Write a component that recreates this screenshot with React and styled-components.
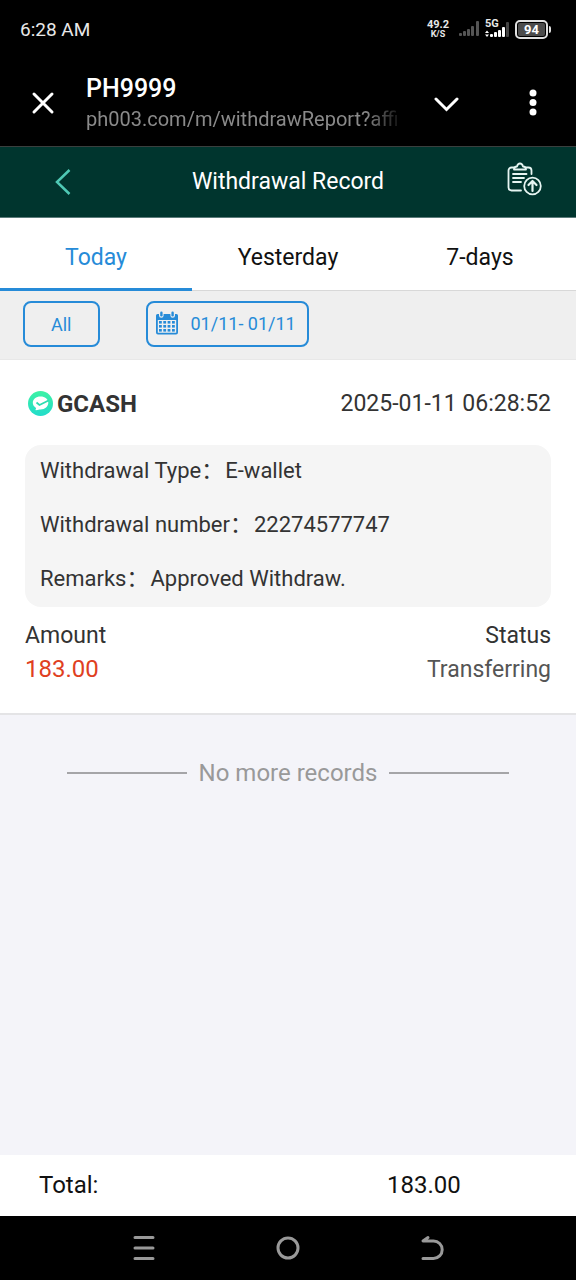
import { useState } from "react";
import styled, { createGlobalStyle } from "styled-components";

const TABS = ["Today", "Yesterday", "7-days"];

const RECORDS = [
	{
		id: 1,
		wallet: "GCASH",
		time: "2025-01-11 06:28:52",
		details: [
			{ label: "Withdrawal Type", value: "E-wallet" },
			{ label: "Withdrawal number", value: "22274577747" },
			{ label: "Remarks", value: "Approved Withdraw." },
		],
		amount: "183.00",
		status: "Transferring",
	},
];

function App() {
	const [activeTab, setActiveTab] = useState("Today");

	return (
		<>
			<GlobalStyle />
			<Screen>
				<StatusBar />
				<BrowserBar />
				<PageHeader>
					<HeaderButton type="button" aria-label="Back">
						<BackIcon />
					</HeaderButton>
					<PageTitle>Withdrawal Record</PageTitle>
					<HeaderButton type="button" aria-label="Withdraw" $end>
						<ClipboardIcon />
					</HeaderButton>
				</PageHeader>
				<Tabs>
					{TABS.map((tab) => (
						<Tab
							key={tab}
							type="button"
							$active={tab === activeTab}
							onClick={() => setActiveTab(tab)}
						>
							{tab}
						</Tab>
					))}
				</Tabs>
				<Filters>
					<FilterButton type="button" $wide>
						All
					</FilterButton>
					<FilterButton type="button">
						<CalendarIcon />
						01/11- 01/11
					</FilterButton>
				</Filters>
				<Content>
					{RECORDS.map((record) => (
						<Record key={record.id} record={record} />
					))}
					<EndOfList>
						<Line />
						No more records
						<Line />
					</EndOfList>
				</Content>
				<TotalBar>
					<span>Total:</span>
					<span>183.00</span>
				</TotalBar>
				<SystemNav />
			</Screen>
		</>
	);
}

export default App;

const GlobalStyle = createGlobalStyle`
	* {
		box-sizing: border-box;
	}
	body {
		margin: 0;
		font-family: Roboto, "Noto Sans CJK SC", sans-serif;
		background: #f4f4f9;
	}
	button {
		margin: 0;
		padding: 0;
		border: 0;
		background: none;
		font-family: inherit;
		color: inherit;
		cursor: pointer;
	}
	svg {
		display: block;
		flex-shrink: 0;
	}
`;

const Screen = styled.div`
	display: flex;
	flex-direction: column;
	min-height: 100vh;
`;

/* ---------- phone status bar ---------- */

const StatusBar = () => (
	<StatusContainer>
		<span>6:28 AM</span>
		<StatusIcons>
			<Speed>
				<span>49.2</span>
				<SpeedUnit>K/S</SpeedUnit>
			</Speed>
			<SignalIcon />
			<Network>
				<NetworkLabel>5G</NetworkLabel>
				<NetworkIcon />
			</Network>
			<Battery>
				<BatteryBody>
					<BatteryLevel>94</BatteryLevel>
				</BatteryBody>
				<BatteryTip />
			</Battery>
		</StatusIcons>
	</StatusContainer>
);

const StatusContainer = styled.div`
	display: flex;
	align-items: center;
	justify-content: space-between;
	height: 60px;
	padding: 0 25px 2px 20px;
	background: #000;
	color: #e8e8e8;
	font-size: 19px;
`;

const StatusIcons = styled.div`
	display: flex;
	align-items: center;
	gap: 6px;
`;

const Speed = styled.div`
	display: flex;
	flex-direction: column;
	align-items: center;
	margin-right: 4px;
	font-size: 11px;
	line-height: 11px;
	font-weight: 700;
`;

const SpeedUnit = styled.span`
	font-size: 9px;
	line-height: 9px;
`;

const Network = styled.div`
	display: grid;
	width: 24px;
	height: 20px;

	& > * {
		grid-area: 1 / 1;
	}
`;

const NetworkLabel = styled.span`
	font-size: 11px;
	line-height: 10px;
	font-weight: 700;
`;

const Battery = styled.div`
	display: flex;
	align-items: center;
	gap: 1px;
`;

const BatteryBody = styled.div`
	display: flex;
	width: 33px;
	height: 19px;
	padding: 1px;
	border: 2px solid #e0e0e0;
	border-radius: 5px;
`;

const BatteryLevel = styled.span`
	flex: 1;
	border-radius: 2px;
	background: #4c4c4c;
	color: #fff;
	font-size: 13px;
	line-height: 13px;
	font-weight: 700;
	text-align: center;
`;

const BatteryTip = styled.span`
	width: 2px;
	height: 7px;
	border-radius: 0 2px 2px 0;
	background: #e0e0e0;
`;

const SignalIcon = () => (
	<svg width="20" height="16" viewBox="0 0 20 16" fill="#555">
		<rect x="0" y="12" width="3" height="3" rx="1" />
		<rect x="4" y="10" width="3" height="5" rx="1" />
		<rect x="8" y="8" width="3" height="7" rx="1" />
		<rect x="12" y="5" width="3" height="10" rx="1" />
		<rect x="17" y="0" width="3" height="15" rx="1" />
	</svg>
);

const NetworkIcon = () => (
	<svg width="24" height="20" viewBox="0 0 24 20" fill="#fff">
		<path d="M0 14l2-2.500 2 2.500zM0 15.500h4L2 18z" />
		<rect x="5" y="15" width="3" height="3" rx="1" />
		<rect x="9" y="13" width="3" height="5" rx="1" />
		<rect x="13" y="11" width="3" height="7" rx="1" />
		<rect x="17" y="8" width="3" height="10" rx="1" />
		<rect x="21" y="3" width="3" height="15" rx="1" fill="#444" />
	</svg>
);

/* ---------- in-app browser bar ---------- */

const BrowserBar = () => (
	<BrowserContainer>
		<BarButton type="button" aria-label="Close">
			<svg width="24" height="24" viewBox="0 0 24 24" stroke="#fff" strokeWidth="3" strokeLinecap="round">
				<path d="M3 3l18 18M21 3L3 21" />
			</svg>
		</BarButton>
		<PageInfo>
			<SiteName>PH9999</SiteName>
			<Url>ph003.com/m/withdrawReport?affi</Url>
		</PageInfo>
		<BarButton type="button" aria-label="Collapse">
			<svg width="26" height="26" viewBox="0 0 26 26" fill="none" stroke="#fff" strokeWidth="3" strokeLinecap="round">
				<path d="M2 9l10.500 10.500L23 9" />
			</svg>
		</BarButton>
		<BarButton type="button" aria-label="More">
			<svg width="8" height="28" viewBox="0 0 8 28" fill="#fff">
				<circle cx="4" cy="4" r="3.500" />
				<circle cx="4" cy="13.500" r="3.500" />
				<circle cx="4" cy="23" r="3.500" />
			</svg>
		</BarButton>
	</BrowserContainer>
);

const BrowserContainer = styled.div`
	display: flex;
	align-items: center;
	height: 87px;
	background: #000;
	border-bottom: 1px solid #3a3f3e;
`;

const BarButton = styled.button`
	display: flex;
	align-items: center;
	justify-content: center;
	width: 86px;
	height: 84px;
`;

const PageInfo = styled.div`
	flex: 1;
	min-width: 0;
	padding-top: 2px;
`;

const SiteName = styled.div`
	color: #fff;
	font-size: 25px;
	line-height: 30px;
	font-weight: 500;
`;

const Url = styled.div`
	white-space: nowrap;
	color: #8a8a8a;
	font-size: 20px;
	line-height: 30px;
	mask-image: linear-gradient(to right, #000 88%, transparent);
`;

/* ---------- page header ---------- */

const PageHeader = styled.header`
	display: grid;
	grid-template-columns: 1fr auto 1fr;
	align-items: center;
	height: 71px;
	padding: 0 34px;
	background: #00352e;
	border-bottom: 1px solid #5b7b7a;
`;

const PageTitle = styled.h1`
	margin: 0;
	color: #fff;
	font-size: 23px;
	line-height: 32px;
	font-weight: 400;
`;

const HeaderButton = styled.button`
	justify-self: ${(props) => (props.$end ? "end" : "start")};
	padding-left: ${(props) => (props.$end ? 0 : 20)}px;
`;

const BackIcon = () => (
	<svg width="18" height="28" viewBox="0 0 18 28" fill="none" stroke="#4fc9b5" strokeWidth="2.500">
		<path d="M15.500 2L3 14l12.500 12" />
	</svg>
);

const ClipboardIcon = () => (
	<svg width="36" height="40" viewBox="0 0 36 40" fill="none" stroke="#e6f5f2" strokeWidth="1.800" strokeLinecap="round" strokeLinejoin="round">
		<path d="M8 5.500H5.500a3 3 0 0 0-3 3v17a3 3 0 0 0 3 3H15" />
		<path d="M20 5.500h2.500a3 3 0 0 1 3 3V12" />
		<path d="M8 7.500c0-2 1-3 3-3 .5-2 1.500-3 3-3s2.500 1 3 3c2 0 3 1 3 3z" />
		<path d="M7 12h13.500M7 16h11M7 20h8" />
		<circle cx="26.500" cy="24" r="8.300" />
		<path d="M26.500 29v-9.500M22.500 23l4-4 4 4" strokeWidth="2.200" />
	</svg>
);

/* ---------- tabs and filters ---------- */

const Tabs = styled.nav`
	display: grid;
	grid-template-columns: repeat(3, 1fr);
	height: 73px;
	background: #fff;
	box-shadow: inset 0 -1px #d8d8d8;
`;

const Tab = styled.button`
	padding-top: 8px;
	border-bottom: 3px solid ${(props) => (props.$active ? "#268bd8" : "transparent")};
	color: ${(props) => (props.$active ? "#268bd8" : "#111")};
	font-size: 23px;
`;

const Filters = styled.div`
	display: flex;
	align-items: center;
	gap: 46px;
	height: 69px;
	padding: 0 23px 2px;
	background: #efefef;
	border-bottom: 1px solid #e8e8e8;
`;

const FilterButton = styled.button`
	display: flex;
	align-items: center;
	gap: 13px;
	height: 46px;
	padding: ${(props) => (props.$wide ? "0 26px" : "0 11px 2px 8px")};
	border: 2px solid #268bd8;
	border-radius: 8px;
	color: #268bd8;
	font-size: 18px;
`;

const CalendarIcon = () => (
	<svg width="22" height="24" viewBox="0 0 22 24" fill="#268bd8">
		<path
			fillRule="evenodd"
			d="M1.500 3H3v1.500a2.300 2.300 0 0 0 4.600 0V3h6.800v1.500a2.300 2.300 0 0 0 4.600 0V3h1.500A1.500 1.500 0 0 1 22 4.500v17a2 2 0 0 1-2 2H2a2 2 0 0 1-2-2v-17A1.500 1.500 0 0 1 1.500 3zM1.800 9v12.700h18.400V9z"
		/>
		<rect x="4.200" y="0.500" width="2.400" height="5" rx="1.200" />
		<rect x="15.400" y="0.500" width="2.400" height="5" rx="1.200" />
		{[10, 14, 18].map((y) =>
			[3, 7.3, 11.600, 16].map((x) => (
				<rect key={`${x}-${y}`} x={x} y={y} width="2.800" height="2.600" />
			))
		)}
	</svg>
);

/* ---------- records ---------- */

const Content = styled.main`
	flex: 1;
	background: #f4f4f9;
`;

const Record = ({ record }) => (
	<Card>
		<CardHeader>
			<Wallet>
				<WalletIcon />
				{record.wallet}
			</Wallet>
			<time>{record.time}</time>
		</CardHeader>
		<Details>
			{record.details.map((item) => (
				<Detail key={item.label}>
					<dt>{item.label}：</dt>
					<DetailValue>{item.value}</DetailValue>
				</Detail>
			))}
		</Details>
		<Summary>
			<span>Amount</span>
			<span>Status</span>
		</Summary>
		<Summary>
			<Amount>{record.amount}</Amount>
			<Status>{record.status}</Status>
		</Summary>
	</Card>
);

const Card = styled.article`
	padding: 0 25px 27px;
	background: #fff;
	border-bottom: 2px solid #e4e4e6;
	color: #333;
	font-size: 23px;
`;

const CardHeader = styled.div`
	display: flex;
	align-items: center;
	justify-content: space-between;
	height: 85px;
	padding-top: 2px;
`;

const Wallet = styled.div`
	display: flex;
	align-items: center;
	gap: 4px;
	padding-left: 3px;
	font-size: 24px;
	font-weight: 700;
`;

const WalletIcon = () => (
	<svg width="25" height="25" viewBox="0 0 25 25">
		<defs>
			<linearGradient id="wallet" x1="0" y1="0" x2="0" y2="1">
				<stop offset="0" stopColor="#3df2a4" />
				<stop offset="1" stopColor="#22dccb" />
			</linearGradient>
		</defs>
		<circle cx="12.500" cy="12.500" r="12.500" fill="url(#wallet)" />
		<path fill="#fff" d="M12.500 5.500c4.500 0 7.800 2.600 7.800 6.300s-3.300 6.700-7.800 6.700c-1.300 0-3 .8-5.300.6.600-.6.900-1.400.8-2.200-2-1.200-3.200-3-3.200-5.100 0-3.700 3.300-6.300 7.700-6.300z" />
		<path fill="none" stroke="#2ddcb0" strokeWidth="1.800" d="M8.500 11.500l3 2.500 9-4.500" />
	</svg>
);

const Details = styled.dl`
	margin: 0 0 11px;
	padding: 0 15px;
	border-radius: 16px;
	background: #f5f5f5;
	font-size: 22px;
`;

const Detail = styled.div`
	display: flex;
	align-items: baseline;
	gap: 2px;
	height: 54px;
	line-height: 52px;
`;

const DetailValue = styled.dd`
	margin: 0;
`;

const Summary = styled.div`
	display: flex;
	align-items: center;
	justify-content: space-between;
	height: 34px;
`;

const Amount = styled.span`
	color: #e0401f;
	font-size: 24px;
`;

const Status = styled.span`
	color: #555;
`;

const EndOfList = styled.div`
	display: flex;
	align-items: center;
	gap: 12px;
	padding: 42px 67px;
	color: #999;
	font-size: 24px;
	line-height: 32px;
`;

const Line = styled.span`
	flex: 1;
	height: 2px;
	background: #a5a5a8;
`;

/* ---------- bottom bars ---------- */

const TotalBar = styled.footer`
	display: flex;
	align-items: center;
	justify-content: space-between;
	height: 61px;
	padding: 0 20% 2px 39px;
	background: #fff;
	color: #111;
	font-size: 24px;
`;

const SystemNav = () => (
	<NavContainer>
		<NavButton type="button" aria-label="Recent apps">
			<svg width="24" height="26" viewBox="0 0 24 26" stroke="#999" strokeWidth="3" strokeLinecap="round">
				<path d="M3 2.500h18M3 13h18M3 23.500h18" />
			</svg>
		</NavButton>
		<NavButton type="button" aria-label="Home">
			<svg width="24" height="26" viewBox="0 0 24 26" fill="none" stroke="#999" strokeWidth="3">
				<circle cx="12" cy="13" r="10" />
			</svg>
		</NavButton>
		<NavButton type="button" aria-label="Back">
			<svg width="24" height="26" viewBox="0 0 24 26" fill="none" stroke="#999" strokeWidth="3" strokeLinecap="round" strokeLinejoin="round">
				<path d="M8 2.500L3 6h10.500a8.700 8.700 0 0 1 0 17.400H3" />
			</svg>
		</NavButton>
	</NavContainer>
);

const NavContainer = styled.nav`
	display: flex;
	justify-content: center;
	height: 64px;
	background: #000;
`;

const NavButton = styled.button`
	display: flex;
	flex: 0 0 25%;
	align-items: center;
	justify-content: center;
`;
